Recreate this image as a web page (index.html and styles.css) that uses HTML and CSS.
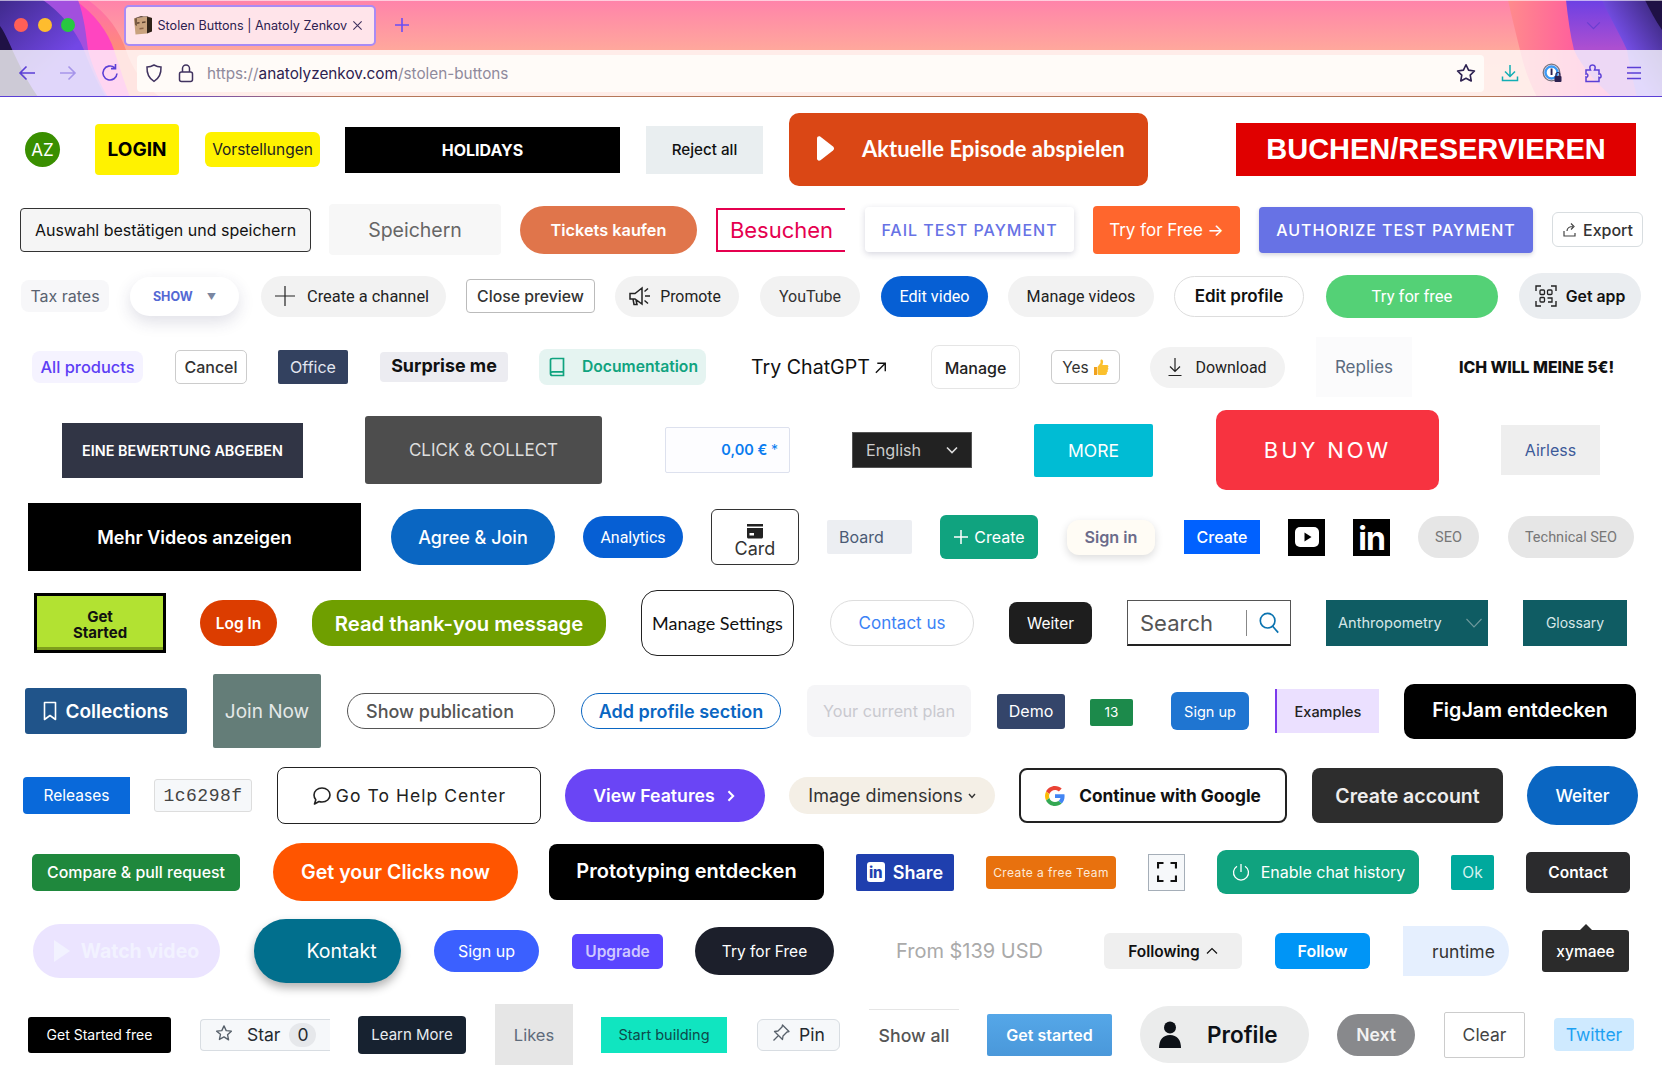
FILE: index.html
```html
<!DOCTYPE html>
<html lang="en">
<head>
  <meta charset="UTF-8" />
  <title>Stolen Buttons | Anatoly Zenkov</title>
  <meta name="viewport" content="width=device-width, initial-scale=1.0" />
  <link rel="stylesheet" href="styles.css">
</head>
<body>
  <header class="chrome">
    <svg class="chrome-bg" viewBox="0 0 1662 97" preserveAspectRatio="none" aria-hidden="true">
      <defs>
        <linearGradient id="base" x1="0" y1="0" x2="0" y2="1"><stop offset="0" stop-color="#ff83aa"/><stop offset=".52" stop-color="#ffa89c"/><stop offset="1" stop-color="#ffb09c"/></linearGradient>
        <linearGradient id="leftPink" x1="0" y1="0" x2="0" y2="1"><stop offset="0" stop-color="#ff6cb0"/><stop offset=".5" stop-color="#ff8a7a"/></linearGradient>
        <linearGradient id="leftDeep" x1="0" y1="0" x2="1" y2="1"><stop offset="0" stop-color="#3f2a8c"/><stop offset=".6" stop-color="#7347e6"/></linearGradient>
        <linearGradient id="rightPink" x1="0" y1="0" x2="1" y2="0"><stop offset="0" stop-color="#ff8b8c"/><stop offset=".7" stop-color="#ff45a6"/></linearGradient>
        <linearGradient id="rightViolet" x1="0" y1="0" x2="0" y2="1"><stop offset="0" stop-color="#6c40e4"/><stop offset=".5" stop-color="#ad4fd0"/></linearGradient>
        <linearGradient id="rightDeep" x1="1" y1="0" x2="0" y2="1"><stop offset="0" stop-color="#33226e"/><stop offset=".6" stop-color="#7a52f0"/></linearGradient>
      </defs>
      <rect width="1662" height="97" fill="url(#base)"/>
      <path d="M88 0C108 14 120 32 126 50C132 68 142 84 160 97H0V0Z" fill="url(#leftPink)"/>
      <path d="M75 0C95 14 108 32 114 50C120 68 125 84 130 97H0V0Z" fill="#ff45c0"/>
      <path d="M78 0C84 16 86 34 88 50C92 66 100 84 108 97H0V0Z" fill="#a24fde"/>
      <path d="M43 0C60 12 76 30 84 50C90 66 98 84 106 97H0V0Z" fill="url(#leftDeep)"/>
      <path d="M0 26C6 34 12 50 18 62C24 74 30 86 38 97H0Z" fill="#1f1145"/>
      <path d="M1508 0C1512 18 1516 34 1520 50C1524 68 1530 84 1537 97H1662V0Z" fill="url(#rightPink)"/>
      <path d="M1566 0C1568 18 1570 34 1574 50C1582 68 1598 84 1612 97H1662V0Z" fill="url(#rightViolet)"/>
      <path d="M1602 0C1610 18 1620 34 1627 50C1630 68 1634 84 1637 97H1662V0Z" fill="url(#rightDeep)"/>
      <path d="M1645 0H1662V30C1655 20 1650 10 1645 0Z" fill="#1f1145"/>
    </svg>

    <div class="tabbar">
      <span class="light red"></span>
      <span class="light amber"></span>
      <span class="light green"></span>
      <div class="tab">
        <svg class="favicon" viewBox="0 0 20 20"><path d="M1 3.5L14 1.5V18.5L2.5 19.5Z" fill="#c9a27e"/><path d="M14 1.5L19 3V16.5L14 18.5Z" fill="#2f2218"/><path d="M1 3.5L8 1L19 3L14 1.5Z" fill="#5c4432"/><path d="M3 7.5L6.5 7V8.5L3 9ZM9 6.8L12.5 6.3V7.8L9 8.3Z" fill="#5e4230"/><path d="M6.5 13L10.5 12.6V14L6.5 14.5Z" fill="#8c6448"/><path d="M1.6 3.5L4 3V11L2 10Z" fill="#7b5c44"/></svg>
        <span class="tab-title">Stolen Buttons | Anatoly Zenkov</span>
        <svg class="tab-close" viewBox="0 0 12 12"><path d="M1.5 1.5L10.5 10.5M10.5 1.5L1.5 10.5" stroke="#40325f" stroke-width="1.2"/></svg>
      </div>
      <svg class="tab-new" viewBox="0 0 16 16"><path d="M8 1V15M1 8H15" stroke="#6a4df5" stroke-width="1.6"/></svg>
      <svg class="tab-list" viewBox="0 0 16 10"><path d="M1 1.5L8 8.5L15 1.5" fill="none" stroke="#6a3fd0" stroke-width="1.4"/></svg>
    </div>

    <div class="toolbar">
      <svg class="tool back" viewBox="0 0 20 20"><path d="M18 10H3M9.5 3.5L3 10L9.5 16.5" fill="none" stroke="#5b3fd6" stroke-width="1.6"/></svg>
      <svg class="tool forward" viewBox="0 0 20 20"><path d="M2 10H17M10.5 3.5L17 10L10.5 16.5" fill="none" stroke="#a695ea" stroke-width="1.6"/></svg>
      <svg class="tool reload" viewBox="0 0 20 20"><path d="M17 10.5A7 7 0 1 1 14.5 4.6M15.5 1V5.6H11" fill="none" stroke="#5b3fd6" stroke-width="1.6"/></svg>
      <div class="urlbar">
        <svg class="tool shield" viewBox="0 0 20 20"><path d="M10 2C12.5 3.5 15 4 17 4C17.3 11 15 15.5 10 18.3C5 15.5 2.7 11 3 4C5 4 7.5 3.5 10 2Z" fill="none" stroke="#40325f" stroke-width="1.5"/></svg>
        <svg class="tool lock" viewBox="0 0 20 20"><rect x="3.5" y="9" width="13" height="9.5" rx="2" fill="none" stroke="#40325f" stroke-width="1.5"/><path d="M6.5 9V5.5A3.5 3.5 0 0 1 13.5 5.5V9" fill="none" stroke="#40325f" stroke-width="1.5"/></svg>
        <span class="url"><span class="url-dim">https://</span>anatolyzenkov.com<span class="url-dim">/stolen-buttons</span></span>
        <svg class="tool star" viewBox="0 0 24 24"><path d="M12 3l2.8 5.9 6.4.9-4.6 4.5 1.1 6.4L12 17.7l-5.7 3 1.1-6.4-4.6-4.5 6.4-.9z" fill="none" stroke="#2d2150" stroke-width="1.8" stroke-linejoin="round"/></svg>
      </div>
      <svg class="tool download" viewBox="0 0 20 20"><path d="M10 2V13M5 8.5L10 13.5L15 8.5M2.5 13.5V17.5H17.5V13.5" fill="none" stroke="#12aeb4" stroke-width="1.5"/></svg>
      <svg class="tool onepass" viewBox="0 0 20 20"><circle cx="9.5" cy="9.5" r="8.3" fill="none" stroke="#77757f" stroke-width="1.3"/><circle cx="9.5" cy="9.5" r="6" fill="#fff" stroke="#3a9bf6" stroke-width="2.4"/><rect x="8.6" y="5.5" width="1.9" height="6.5" fill="#2d2150"/><rect x="12.5" y="13" width="7" height="6" rx="1" fill="#2d2150"/><path d="M14 13V11.5A2 2 0 0 1 18 11.5V13" fill="none" stroke="#2d2150" stroke-width="1.2"/></svg>
      <svg class="tool puzzle" viewBox="0 0 20 20"><path d="M3 7H7.5C6 4 7 2 9.5 2C12 2 13 4 11.5 7H16V11C18.5 10 19 16 16 14.5V18.5H3V14C5.5 15 5.5 10 3 11Z" fill="none" stroke="#5b3fd6" stroke-width="1.5"/></svg>
      <svg class="tool menu" viewBox="0 0 20 20"><path d="M3 4.5H17M3 10H17M3 15.5H17" stroke="#5b3fd6" stroke-width="1.6"/></svg>
    </div>
    <div class="chrome-line"></div>
  </header>

  <main class="gallery">
    <div class="row row-first">
      <button class="btn az">AZ</button>
      <button class="btn login">LOGIN</button>
      <button class="btn vorst">Vorstellungen</button>
      <button class="btn holidays">HOLIDAYS</button>
      <button class="btn reject">Reject all</button>
      <button class="btn episode">
        <svg class="episode-play" viewBox="0 0 20 27"><path d="M2 3.5C2 1.5 4 .8 5.5 1.8L18 11.5C19.4 12.6 19.4 14.4 18 15.5L5.5 25.2C4 26.2 2 25.5 2 23.5Z" fill="#fff"/></svg>
        <span>Aktuelle Episode abspielen</span>
      </button>
      <button class="btn buchen">BUCHEN/RESERVIEREN</button>
    </div>

    <div class="row">
      <button class="btn auswahl">Auswahl bestätigen und speichern</button>
      <button class="btn speichern">Speichern</button>
      <button class="btn tickets">Tickets kaufen</button>
      <button class="btn besuchen">Besuchen</button>
      <button class="btn fail">FAIL TEST PAYMENT</button>
      <button class="btn tryfree-arrow">Try for Free →</button>
      <button class="btn authorize">AUTHORIZE TEST PAYMENT</button>
      <button class="btn export">
        <svg class="ico-16" viewBox="0 0 16 16"><path d="M2 9V14H13V11M5 9C5 6 7.5 4.5 11 4.5M9 1.5L12 4.5L9 7.5" fill="none" stroke="#444" stroke-width="1.2"/></svg>
        <span>Export</span>
      </button>
    </div>

    <div class="row">
      <button class="btn taxrates">Tax rates</button>
      <button class="btn show">SHOW <span class="show-caret">▼</span></button>
      <button class="btn channel">
        <svg class="ico-20" viewBox="0 0 20 20"><path d="M10 0V20M0 10H20" stroke="#222" stroke-width="1.2"/></svg>
        <span>Create a channel</span>
      </button>
      <button class="btn closepreview">Close preview</button>
      <button class="btn promote">
        <svg class="ico-24" viewBox="0 0 24 24"><path d="M2 9.5H7L14 4V20L7 15H2ZM5 15L6 20.5H9L8 16M17 12H22M16.5 7.5L20 4.5M16.5 16.5L20 19.5" fill="none" stroke="#222" stroke-width="1.5"/></svg>
        <span>Promote</span>
      </button>
      <button class="btn youtube">YouTube</button>
      <button class="btn editvideo">Edit video</button>
      <button class="btn managevideos">Manage videos</button>
      <button class="btn editprofile">Edit profile</button>
      <button class="btn tryfree-green">Try for free</button>
      <button class="btn getapp">
        <svg class="ico-22" viewBox="0 0 22 22"><path d="M1 6V1H6M16 1H21V6M21 16V21H16M6 21H1V16" fill="none" stroke="#222" stroke-width="1.4"/><rect x="5" y="5" width="4.5" height="4.5" rx="1" fill="none" stroke="#222" stroke-width="1.3"/><rect x="12.5" y="5" width="4.5" height="4.5" rx="1" fill="none" stroke="#222" stroke-width="1.3"/><rect x="5" y="12.5" width="4.5" height="4.5" rx="1" fill="none" stroke="#222" stroke-width="1.3"/><path d="M12.5 13H17V17H13" fill="none" stroke="#222" stroke-width="1.3"/></svg>
        <span>Get app</span>
      </button>
    </div>

    <div class="row">
      <button class="btn allproducts">All products</button>
      <button class="btn cancel">Cancel</button>
      <button class="btn office">Office</button>
      <button class="btn surprise">Surprise me</button>
      <button class="btn documentation">
        <svg class="ico-20" viewBox="0 0 20 20"><path d="M3.5 16.5V3C3.5 2 4.5 1.5 5.5 1.5H16.5V18.5H5.5C4.5 18.5 3.5 17.5 3.5 16.5C3.5 15.5 4.5 14.8 5.5 14.8H16.5" fill="none" stroke="#10a37f" stroke-width="1.7"/></svg>
        <span>Documentation</span>
      </button>
      <span class="btn chatgpt">Try ChatGPT <svg class="chatgpt-arrow" viewBox="0 0 14 14"><path d="M2 12.5L12 2.5M3.5 2.5H12V11" fill="none" stroke="#111" stroke-width="1.5"/></svg></span>
      <button class="btn manage">Manage</button>
      <button class="btn yes">
        <span>Yes</span>
        <svg class="thumb" viewBox="0 0 16 17"><path d="M1 8H4V16H1Z" fill="#f0a11f"/><path d="M4.5 8L7.5 4V1.2C7.5.3 9.6.3 10 2C10.3 3.3 9.8 4.8 9.4 6H14C15.6 6 15.8 8 14.8 8.6C15.8 9.4 15.5 10.8 14.5 11.1C15.2 12 14.8 13.2 13.8 13.5C14.2 14.8 13.5 16 12 16H6.5C5.5 16 4.8 15.6 4.5 15.2Z" fill="#fbc02d"/></svg>
      </button>
      <button class="btn download-btn">
        <svg class="ico-20" viewBox="0 0 20 20"><path d="M10 1V14M5 9.5L10 14.5L15 9.5M3.5 18.5H16.5" fill="none" stroke="#222" stroke-width="1.2"/></svg>
        <span>Download</span>
      </button>
      <button class="btn replies">Replies</button>
      <span class="btn ich">ICH WILL MEINE 5€!</span>
    </div>

    <div class="row row-tight">
      <button class="btn bewertung">EINE BEWERTUNG ABGEBEN</button>
      <button class="btn clickcollect">CLICK &amp; COLLECT</button>
      <button class="btn price"><span>0,00 € <small>*</small></span></button>
      <button class="btn english">
        <span>English</span>
        <svg class="ico-12" viewBox="0 0 12 8"><path d="M1 1.5L6 6.5L11 1.5" fill="none" stroke="#ddd" stroke-width="1.6"/></svg>
      </button>
      <button class="btn more">MORE</button>
      <button class="btn buynow">BUY NOW</button>
      <button class="btn airless">Airless</button>
    </div>

    <div class="row row-tight">
      <button class="btn mehr">Mehr Videos anzeigen</button>
      <button class="btn agree">Agree &amp; Join</button>
      <button class="btn analytics">Analytics</button>
      <button class="btn card">
        <svg class="card-ico" viewBox="0 0 18 16"><path d="M1 1H17V3.5H1ZM1 5H17V14C17 15 16 15.5 15.5 15.5H2.5C2 15.5 1 15 1 14Z" fill="#222"/><rect x="3.5" y="10" width="4.5" height="2.5" fill="#fff"/></svg>
        <span>Card</span>
      </button>
      <button class="btn board">Board</button>
      <button class="btn create-green">
        <svg class="ico-16" viewBox="0 0 16 16"><path d="M8 1V15M1 8H15" stroke="#fff" stroke-width="1.5"/></svg>
        <span>Create</span>
      </button>
      <button class="btn signin">Sign in</button>
      <button class="btn create-blue">Create</button>
      <span class="btn social">
        <svg class="ico-24 yt" viewBox="0 0 24 20"><rect width="24" height="20" rx="5" fill="#fff"/><path d="M9.5 5.5L16.5 10L9.5 14.5Z" fill="#000"/></svg>
      </span>
      <span class="btn social in-logo">in</span>
      <button class="btn seo">SEO</button>
      <button class="btn techseo">Technical SEO</button>
    </div>

    <div class="row row-wide">
      <button class="btn getstarted-lime">Get<br>Started</button>
      <button class="btn login-red">Log In</button>
      <button class="btn thankyou">Read thank-you message</button>
      <button class="btn settings">Manage Settings</button>
      <button class="btn contactus">Contact us</button>
      <button class="btn weiter-dark">Weiter</button>
      <div class="btn search">
        <span class="search-text">Search</span>
        <span class="search-line"></span>
        <svg class="ico-22" viewBox="0 0 22 24"><circle cx="9.5" cy="9.5" r="8" fill="none" stroke="#0a73b0" stroke-width="1.8"/><path d="M15 15.5L21 22.5" stroke="#0a73b0" stroke-width="1.8"/></svg>
      </div>
      <button class="btn anthro">
        <span>Anthropometry</span>
        <svg class="ico-16" viewBox="0 0 16 10"><path d="M.5 1L8 9L15.5 1" fill="none" stroke="#6f9a9d" stroke-width="1.1"/></svg>
      </button>
      <button class="btn glossary">Glossary</button>
    </div>

    <div class="row">
      <button class="btn collections">
        <svg class="bookmark" viewBox="0 0 14 20"><path d="M1.5 1.5H12.5V18.5L7 14.5L1.5 18.5Z" fill="none" stroke="#fff" stroke-width="1.6" stroke-linejoin="round"/></svg>
        <span>Collections</span>
      </button>
      <button class="btn joinnow">Join Now</button>
      <button class="btn showpub">Show publication</button>
      <button class="btn addprofile">Add profile section</button>
      <button class="btn currentplan">Your current plan</button>
      <button class="btn demo">Demo</button>
      <span class="btn count">13</span>
      <button class="btn signup-blue">Sign up</button>
      <button class="btn examples">Examples</button>
      <button class="btn figjam">FigJam entdecken</button>
    </div>

    <div class="row">
      <button class="btn releases">Releases</button>
      <button class="btn commit">1c6298f</button>
      <button class="btn helpcenter">
        <svg class="ico-20" viewBox="0 0 20 20"><path d="M10 2C14.5 2 18 5 18 9C18 13 14.5 16 10 16C9 16 8 15.9 7 15.5L2.5 18L3.8 13.7C2.7 12.4 2 10.8 2 9C2 5 5.5 2 10 2Z" fill="none" stroke="#222" stroke-width="1.6" stroke-linejoin="round"/></svg>
        <span>Go To Help Center</span>
      </button>
      <button class="btn features">
        <span>View Features</span>
        <svg class="ico-12" viewBox="0 0 10 14"><path d="M2 1.5L7.5 7L2 12.5" fill="none" stroke="#fff" stroke-width="2.4"/></svg>
      </button>
      <button class="btn dimensions">
        <span>Image dimensions</span>
        <svg class="ico-8" viewBox="0 0 8 6"><path d="M1 1L4 4.5L7 1" fill="none" stroke="#333" stroke-width="1.4"/></svg>
      </button>
      <button class="btn google">
        <svg class="ico-20" viewBox="0 0 48 48">
          <path fill="#EA4335" d="M24 9.5c3.54 0 6.71 1.22 9.21 3.6l6.85-6.85C35.9 2.38 30.47 0 24 0 14.62 0 6.51 5.38 2.56 13.22l7.98 6.19C12.43 13.72 17.74 9.5 24 9.5z"/>
          <path fill="#4285F4" d="M46.98 24.55c0-1.57-.15-3.09-.38-4.55H24v9.02h12.94c-.58 2.96-2.26 5.48-4.78 7.18l7.73 6c4.51-4.18 7.09-10.36 7.09-17.65z"/>
          <path fill="#FBBC05" d="M10.53 28.59c-.48-1.45-.76-2.99-.76-4.59s.27-3.14.76-4.59l-7.98-6.19C.92 16.46 0 20.12 0 24c0 3.88.92 7.54 2.56 10.78l7.97-6.19z"/>
          <path fill="#34A853" d="M24 48c6.48 0 11.93-2.13 15.89-5.81l-7.73-6c-2.15 1.45-4.92 2.3-8.16 2.3-6.26 0-11.57-4.22-13.47-9.91l-7.98 6.19C6.51 42.62 14.62 48 24 48z"/>
        </svg>
        <span>Continue with Google</span>
      </button>
      <button class="btn createaccount">Create account</button>
      <button class="btn weiter-blue">Weiter</button>
    </div>

    <div class="row">
      <button class="btn compare">Compare &amp; pull request</button>
      <button class="btn clicks">Get your Clicks now</button>
      <button class="btn prototyping">Prototyping entdecken</button>
      <button class="btn share">
        <span class="share-in">in</span>
        <span>Share</span>
      </button>
      <button class="btn freeteam">Create a free Team</button>
      <button class="btn expand">
        <svg class="ico-20" viewBox="0 0 20 20"><path d="M1 6.5V1H6.5M13.5 1H19V6.5M19 13.5V19H13.5M6.5 19H1V13.5" fill="none" stroke="#111" stroke-width="2.2"/></svg>
      </button>
      <button class="btn chathistory">
        <svg class="ico-20" viewBox="0 0 20 20"><path d="M10 2V10M6 4.2A7.5 7.5 0 1 0 14 4.2" fill="none" stroke="#fff" stroke-width="1.3"/></svg>
        <span>Enable chat history</span>
      </button>
      <button class="btn ok">Ok</button>
      <button class="btn contact-dark">Contact</button>
    </div>

    <div class="row">
      <button class="btn watch">
        <svg class="watch-play" viewBox="0 0 16 22"><path d="M0 0L16 11L0 22Z" fill="#f2f2ff"/></svg>
        <span>Watch video</span>
      </button>
      <button class="btn kontakt">Kontakt</button>
      <button class="btn signup-royal">Sign up</button>
      <button class="btn upgrade">Upgrade</button>
      <button class="btn tryfree-dark">Try for Free</button>
      <span class="btn from">From $139 USD</span>
      <button class="btn following">
        <span>Following</span>
        <svg class="ico-12" viewBox="0 0 12 8"><path d="M1 6.5L6 1.5L11 6.5" fill="none" stroke="#111" stroke-width="1.2"/></svg>
      </button>
      <button class="btn follow">Follow</button>
      <button class="btn runtime">runtime</button>
      <button class="btn xymaee">xymaee</button>
    </div>

    <div class="row row-last">
      <button class="btn getstarted-black">Get Started free</button>
      <button class="btn star-btn">
        <svg class="ico-18 star-ico" viewBox="0 0 24 24"><path d="M12 2.5l2.9 6.3 6.9.8-5.1 4.7 1.4 6.8L12 17.1 5.9 20.6l1.4-6.8L2.2 9.6l6.9-.8z" fill="none" stroke="#57606a" stroke-width="1.8" stroke-linejoin="round"/></svg>
        <span class="star-label">Star</span>
        <span class="star-count">0</span>
      </button>
      <button class="btn learnmore">Learn More</button>
      <button class="btn likes">Likes</button>
      <button class="btn startbuilding">Start building</button>
      <button class="btn pin">
        <svg class="ico-18 star-ico" viewBox="0 0 18 18"><path d="M10.5 1L17 7.5L15 8L11 12L10.5 15.5L2.5 7.5L6 7L10 3ZM6 12L1.5 16.5" fill="none" stroke="#57606a" stroke-width="1.3" stroke-linejoin="round"/></svg>
        <span>Pin</span>
      </button>
      <button class="btn showall">Show all</button>
      <button class="btn getstarted-blue">Get started</button>
      <button class="btn profile">
        <svg class="profile-ico" viewBox="0 0 24 28"><circle cx="12" cy="6.5" r="6" fill="#0d1117"/><path d="M1 27C1 19 5 14 12 14C19 14 23 19 23 27Z" fill="#0d1117"/></svg>
        <span>Profile</span>
      </button>
      <button class="btn next">Next</button>
      <button class="btn clear">Clear</button>
      <button class="btn twitter">Twitter</button>
    </div>
  </main>
</body>
</html>
```

FILE: styles.css
```css
html, body {
  margin: 0;
  background: #fff;
}

body {
  font-family: Inter, "Liberation Sans", sans-serif;
  overflow: hidden;
  height: 1080px;
}

/* browser window */
.chrome {
  position: relative;
  height: 97px;
}

.chrome-bg {
  position: absolute;
  inset: 0;
  width: 100%;
  height: 100%;
}

.tabbar {
  position: relative;
  display: flex;
  align-items: center;
  height: 50px;
  padding-left: 14px;
  box-shadow: inset 0 1px rgba(255, 255, 255, 0.6);
}

.light {
  width: 14px;
  height: 14px;
  margin-right: 9.5px;
  border-radius: 50%;
}

.light.red { background: #ff5f57; }
.light.amber { background: #febc2e; }
.light.green { background: #28c840; }

.tab {
  display: flex;
  align-items: center;
  box-sizing: border-box;
  width: 252px;
  height: 41px;
  margin-left: 39px;
  padding-left: 7px;
  background: #ffe4ea;
  border: 2px solid #a98bf5;
  border-radius: 5px;
}

.favicon {
  width: 20px;
  height: 20px;
}

.tab-title {
  margin-left: 5px;
  font-size: 12.6px;
  color: #2d2150;
  white-space: nowrap;
}

.tab-close {
  width: 11px;
  height: 11px;
  margin-left: 5px;
}

.tab-new {
  width: 16px;
  height: 16px;
  margin-left: 18px;
}

.tab-list {
  width: 15px;
  height: 9px;
  margin-left: auto;
  margin-right: 61px;
}

.toolbar {
  position: relative;
  display: flex;
  align-items: center;
  height: 46px;
  padding-left: 17px;
  background: rgba(255, 255, 255, 0.78);
}

.tool {
  width: 20px;
  height: 20px;
  flex: none;
}

.forward { margin-left: 21px; }
.reload { margin-left: 22px; }
.download { margin-left: 16px; }
.onepass { margin-left: 22px; }
.puzzle { margin-left: 21px; }
.menu { margin-left: 21px; }

.urlbar {
  display: flex;
  align-items: center;
  box-sizing: border-box;
  width: 1347px;
  height: 37px;
  margin-left: 17px;
  padding: 0 7px;
  background: #fffbf8;
  border-radius: 4px;
}

.lock { margin-left: 12px; }

.url {
  margin-left: 11px;
  font-size: 15.3px;
  color: #2d2150;
}

.url-dim { color: #8f8a9c; }

.star {
  width: 22px;
  height: 22px;
  margin-left: auto;
}

.chrome-line {
  position: relative;
  height: 1px;
  background: linear-gradient(to right, #5b3fd6 0, #5b3fd6 9%, #b5775a 20%, #b5775a 90%, #5b3fd6 96%);
}

/* button gallery */
.row {
  display: flex;
  align-items: center;
  margin-top: 18px;
}

.row-first { margin-top: 16px; }
.row-tight { margin-top: 13px; }
.row-wide { margin-top: 19px; }
.row-last { margin-top: 21px; }

.btn {
  display: flex;
  align-items: center;
  justify-content: center;
  flex: none;
  box-sizing: border-box;
  padding: 0;
  border: 0;
  font: 400 16px Inter, "Liberation Sans", sans-serif;
  color: #fff;
  white-space: nowrap;
}

.ico-8 { width: 8px; height: 6px; }
.ico-12 { width: 12px; height: 12px; }
.ico-16 { width: 16px; height: 16px; }
.ico-18 { width: 18px; height: 18px; }
.ico-20 { width: 20px; height: 20px; }
.ico-22 { width: 22px; height: 22px; }
.ico-24 { width: 24px; height: 24px; }

.az { margin-left: 25px; width: 35px; height: 35px; border-radius: 50%; background: #3a8f00; font-size: 17px; }
.login { margin-left: 35px; width: 84px; height: 51px; border-radius: 4px; background: #fff200; color: #000; font-size: 19px; font-weight: 700; }
.vorst { margin-left: 26px; width: 115px; height: 35px; border-radius: 6px; background: #fff200; color: #222; font-size: 15.5px; }
.holidays { margin-left: 25px; width: 275px; height: 46px; background: #000; font-size: 16px; font-weight: 700; }
.reject { margin-left: 26px; width: 117px; height: 48px; background: #e9eef0; color: #111; font-size: 15.2px; font-weight: 500; }
.episode { margin-left: 26px; width: 359px; height: 73px; justify-content: flex-start; padding: 0 0 2px 26px; gap: 27px; border-radius: 10px; background: #da4715; font: 700 22px Lato, sans-serif; }
.episode-play { width: 20px; height: 27px; }
.buchen { margin-left: 88px; width: 400px; height: 53px; background: #e00000; font: 700 29px "Liberation Sans", sans-serif; }

.auswahl { margin-left: 20px; width: 291px; height: 44px; border: 1px solid #333; border-radius: 4px; background: #f5f5f5; color: #111; font-size: 16px; }
.speichern { margin-left: 18px; width: 172px; height: 51px; border-radius: 4px; background: #f7f7f7; color: #666; font-size: 19.5px; }
.tickets { margin-left: 19px; width: 177px; height: 48px; border-radius: 24px; background: #e0754b; font-size: 16.3px; font-weight: 600; }
.besuchen { margin-left: 19px; width: 129px; height: 44px; border: 2px solid #e5004f; border-right: 0; background: #fff; color: #e5004f; font-size: 22px; }
.fail { margin-left: 20px; width: 209px; height: 45px; border-radius: 4px; background: #fff; box-shadow: 0 2px 6px rgba(50, 50, 93, 0.2); color: #6772e5; font-size: 16px; font-weight: 500; letter-spacing: 1px; }
.tryfree-arrow { margin-left: 19px; width: 147px; height: 48px; border-radius: 4px; background: #ff662d; font-size: 17px; }
.authorize { margin-left: 19px; width: 274px; height: 46px; border-radius: 4px; background: #6772e5; box-shadow: 0 2px 4px rgba(50, 50, 93, 0.2); font-size: 16px; font-weight: 500; letter-spacing: 0.95px; }
.export { margin-left: 19px; width: 91px; height: 35px; gap: 5px; border: 1px solid #d8dde0; border-radius: 6px; background: #fff; color: #333; font-size: 16px; font-weight: 500; }

.taxrates { margin-left: 21px; width: 88px; height: 32px; border-radius: 8px; background: #f7f7f9; color: #5a6270; font-size: 16px; }
.show { margin-left: 21px; width: 109px; height: 39px; gap: 8px; border-radius: 20px; background: #fff; box-shadow: 0 6px 16px rgba(50, 50, 93, 0.15); color: #5469d4; font-size: 12.5px; font-weight: 700; }
.show-caret { font-size: 9px; color: #7a86a0; margin-left: 6px; }
.channel { margin-left: 22px; width: 185px; height: 41px; justify-content: flex-start; padding-left: 14px; gap: 12px; border-radius: 21px; background: #f2f2f2; color: #222; font: 400 16.4px Roboto, sans-serif; }
.closepreview { margin-left: 20px; width: 129px; height: 34px; border: 1px solid #bbb; border-radius: 4px; background: #fff; color: #333; font-size: 15.8px; font-weight: 500; }
.promote { margin-left: 20px; width: 124px; height: 41px; gap: 8px; padding-right: 5px; border-radius: 21px; background: #f2f2f2; color: #222; font: 400 15.8px Roboto, sans-serif; }
.youtube { margin-left: 21px; width: 100px; height: 41px; border-radius: 21px; background: #f2f2f2; color: #333; font: 400 16px Roboto, sans-serif; }
.editvideo { margin-left: 21px; width: 107px; height: 41px; border-radius: 21px; background: #065fd4; font: 400 16.2px Roboto, sans-serif; }
.managevideos { margin-left: 20px; width: 146px; height: 41px; border-radius: 21px; background: #f2f2f2; color: #222; font: 400 16.1px Roboto, sans-serif; }
.editprofile { margin-left: 20px; width: 130px; height: 41px; border: 1px solid #ddd; border-radius: 21px; background: #fff; color: #111; font-size: 17px; font-weight: 600; }
.tryfree-green { margin-left: 22px; width: 172px; height: 43px; border-radius: 22px; background: #54d176; font: 400 16.6px Roboto, sans-serif; }
.getapp { margin-left: 21px; width: 122px; height: 46px; gap: 9px; border-radius: 23px; background: #eaedf0; color: #111; font-size: 15.8px; font-weight: 600; }

.allproducts { margin-left: 32px; width: 111px; height: 32px; border-radius: 8px; background: #f5f3ff; color: #5e3ff5; font-size: 16.4px; font-weight: 500; }
.cancel { margin-left: 32px; width: 72px; height: 34px; border: 1px solid #ccc; border-radius: 5px; background: #fff; color: #333; font-size: 16px; font-weight: 500; }
.office { margin-left: 31px; width: 70px; height: 34px; border-radius: 2px; background: #33415f; color: #e2e6f0; font-size: 16px; }
.surprise { margin-left: 32px; width: 128px; height: 30px; padding-bottom: 3px; border-radius: 4px; background: #ececf1; color: #111; font-size: 17.9px; font-weight: 700; }
.documentation { margin-left: 31px; width: 167px; height: 36px; gap: 15px; padding-bottom: 1px; border-radius: 8px; background: #e5f4f1; color: #10a37f; font-size: 15.7px; font-weight: 600; }
.chatgpt { margin-left: 45px; width: 136px; gap: 4px; color: #111; font-size: 19.6px; }
.chatgpt-arrow { width: 15px; height: 15px; }
.manage { margin-left: 44px; width: 89px; height: 44px; padding-top: 1px; border: 1px solid #e5e5e5; border-radius: 8px; background: #fff; color: #222; font-size: 16px; font-weight: 500; }
.yes { margin-left: 31px; width: 69px; height: 34px; gap: 4px; border: 1px solid #ccc; border-radius: 6px; background: #fff; color: #333; font-size: 15.5px; }
.thumb { width: 16px; height: 17px; }
.download-btn { margin-left: 30px; width: 135px; height: 41px; gap: 10px; padding-right: 3px; border-radius: 21px; background: #f2f2f2; color: #222; font: 400 16px Roboto, sans-serif; }
.replies { margin-left: 31px; width: 96px; height: 60px; background: #fbfbfc; color: #5a6b7f; font-size: 17px; }
.ich { margin-left: 47px; width: 155px; color: #111; font-size: 15.8px; font-weight: 800; }

.bewertung { margin-left: 62px; width: 241px; height: 55px; background: #313545; font-size: 14.4px; font-weight: 600; }
.clickcollect { margin-left: 62px; width: 237px; height: 68px; border-radius: 3px; background: #4d4d4d; color: #ddd; font-size: 17px; }
.price { margin-left: 63px; width: 125px; height: 46px; justify-content: flex-end; padding: 0 11px 2px 0; border: 1px solid #dde1ee; border-radius: 2px; background: #fdfdff; color: #0a7cf0; font-size: 14.5px; font-weight: 600; }
.price small { font-size: 14px; font-weight: 400; }
.english { margin-left: 62px; width: 120px; height: 36px; justify-content: space-between; padding: 0 13px; border: 1px solid #555; background: #222; color: #ccc; font-size: 16.2px; }
.more { margin-left: 62px; width: 119px; height: 53px; border-radius: 2px; background: #00bcd4; font-size: 17.5px; }
.buynow { margin-left: 63px; width: 223px; height: 80px; border-radius: 10px; background: #f73340; font-size: 22px; letter-spacing: 2.9px; }
.airless { margin-left: 62px; width: 99px; height: 50px; background: #eee; color: #3d5a99; font-size: 16px; }

.mehr { margin-left: 28px; width: 333px; height: 68px; background: #000; font-size: 18px; font-weight: 600; }
.agree { margin-left: 30px; width: 164px; height: 56px; border-radius: 28px; background: #0a66c2; font-size: 18px; font-weight: 500; }
.analytics { margin-left: 28px; width: 100px; height: 42px; border-radius: 21px; background: #065fd4; font: 400 16px Roboto, sans-serif; }
.card { margin-left: 28px; width: 88px; height: 56px; flex-direction: column; padding-top: 8px; border: 1.5px solid #333; border-radius: 6px; background: #fff; color: #333; font-size: 18px; line-height: 20px; }
.card-ico { width: 18px; height: 16px; }
.board { margin-left: 28px; width: 85px; height: 34px; justify-content: flex-start; padding-left: 12px; border-radius: 2px; background: #eceef2; color: #4a5a75; font-size: 16px; }
.create-green { margin-left: 28px; width: 98px; height: 44px; gap: 5px; border-radius: 6px; background: #10a37f; font-size: 16px; }
.signin { margin-left: 29px; width: 88px; height: 35px; border-radius: 12px; background: #fffcf5; box-shadow: 0 3px 8px rgba(0, 0, 0, 0.14); color: #6b6b8a; font-size: 16.2px; font-weight: 600; }
.create-blue { margin-left: 29px; width: 76px; height: 34px; background: #0061ff; font-size: 16px; font-weight: 500; }
.social { margin-left: 28px; width: 37px; height: 37px; background: #000; }
.yt { width: 24px; height: 20px; }
.in-logo { font: 700 32px Inter, sans-serif; letter-spacing: -1px; line-height: 37px; padding-top: 2px; }
.seo { margin-left: 28px; width: 61px; height: 42px; border-radius: 21px; background: #e6e6e6; color: #777; font: 400 14.5px Roboto, sans-serif; }
.techseo { margin-left: 29px; width: 126px; height: 42px; border-radius: 21px; background: #e6e6e6; color: #777; font: 400 14.5px Roboto, sans-serif; }

.getstarted-lime { margin-left: 34px; width: 132px; height: 60px; padding-top: 3px; border: 3px solid #000; background: #b2e232; box-shadow: inset 0 -3px #7d9e1c; color: #111; font-size: 15px; font-weight: 700; line-height: 16px; text-align: center; }
.login-red { margin-left: 34px; width: 77px; height: 46px; border-radius: 23px; background: #dc3d00; font-size: 15.5px; font-weight: 600; }
.thankyou { margin-left: 35px; width: 294px; height: 46px; border-radius: 20px; background: #6f9f00; font-size: 20.3px; font-weight: 600; }
.settings { margin-left: 35px; width: 153px; height: 66px; border: 1.5px solid #222; border-radius: 16px; background: #fff; color: #111; font: 400 18px Lato, sans-serif; }
.contactus { margin-left: 36px; width: 144px; height: 46px; border: 1px solid #ddd; border-radius: 23px; background: #fff; color: #3b82f6; font-size: 17px; }
.weiter-dark { margin-left: 35px; width: 83px; height: 42px; border-radius: 8px; background: #1e1e1e; font-size: 15.5px; }
.search { margin-left: 35px; width: 164px; height: 46px; justify-content: flex-start; padding-left: 12px; border: 1px solid #555; border-bottom: 2px solid #222; background: #fff; color: #555; }
.search-text { font-size: 22px; width: 106px; }
.search-line { width: 1px; height: 26px; background: #888; margin-right: 11px; }
.anthro { margin-left: 35px; width: 162px; height: 46px; justify-content: space-between; padding: 0 6px 0 12px; background: #0f5c63; color: #d6e7e8; font-size: 14.6px; }
.glossary { margin-left: 35px; width: 104px; height: 46px; padding-bottom: 1px; background: #0f5c63; color: #d6e7e8; font-size: 14px; }

.collections { margin-left: 25px; width: 162px; height: 46px; gap: 8px; border-radius: 3px; background: #20548a; font-size: 19px; font-weight: 600; }
.bookmark { width: 14px; height: 20px; }
.joinnow { margin-left: 26px; width: 108px; height: 74px; border-radius: 2px; background: #647d78; color: #e4e9e8; font-size: 19px; }
.showpub { margin-left: 26px; width: 208px; height: 36px; justify-content: flex-start; padding-left: 18px; border: 1px solid #555; border-radius: 18px; background: #fff; color: #555; font-size: 18px; font-weight: 500; }
.addprofile { margin-left: 26px; width: 200px; height: 36px; border: 1px solid #0a66c2; border-radius: 18px; background: #fff; color: #0a66c2; font-size: 18px; font-weight: 600; }
.currentplan { margin-left: 26px; width: 164px; height: 52px; border-radius: 8px; background: #f5f5f7; color: #c9c9cf; font-size: 16.2px; }
.demo { margin-left: 26px; width: 68px; height: 35px; border-radius: 3px; background: #34456a; font-size: 16px; }
.count { margin-left: 25px; margin-top: 2px; width: 43px; height: 27px; border-radius: 2px; background: #1c8a4b; font-size: 13.5px; }
.signup-blue { margin-left: 38px; width: 78px; height: 38px; border-radius: 6px; background: #1f75d1; font-size: 14.5px; }
.examples { margin-left: 26px; width: 104px; height: 44px; border-left: 2px solid #7c3aed; background: #ebe0ff; color: #222; font-size: 14.5px; font-weight: 500; }
.figjam { margin-left: 25px; width: 232px; height: 55px; padding-bottom: 2px; border-radius: 10px; background: #000; font-size: 19.8px; font-weight: 600; }

.releases { margin-left: 23px; width: 107px; height: 37px; border-radius: 4px 0 0 4px; background: #0969da; font-size: 15.5px; }
.commit { margin-left: 24px; width: 98px; height: 33px; border: 1px solid #ddd; border-radius: 3px; background: #f6f8fa; color: #444; font: 400 18px "Liberation Mono", monospace; letter-spacing: 0.5px; }
.helpcenter { margin-left: 25px; width: 264px; height: 57px; gap: 4px; border: 1px solid #222; border-radius: 8px; background: #fff; color: #222; font-size: 17.5px; letter-spacing: 1.05px; }
.features { margin-left: 24px; width: 200px; height: 53px; gap: 10px; border-radius: 27px; background: #6a45f5; font-size: 17.7px; font-weight: 600; }
.dimensions { margin-left: 24px; width: 206px; height: 37px; gap: 5px; border-radius: 19px; background: #f4efe6; color: #333; font-size: 18px; }
.google { margin-left: 24px; width: 268px; height: 55px; gap: 14px; border: 2px solid #222; border-radius: 8px; background: #fff; color: #111; font-size: 17.3px; font-weight: 700; }
.createaccount { margin-left: 25px; width: 191px; height: 55px; border-radius: 8px; background: #2d2d2d; color: #eee; font-size: 19.5px; font-weight: 600; }
.weiter-blue { margin-left: 24px; width: 111px; height: 59px; border-radius: 30px; background: #0a66c2; font-size: 17.5px; font-weight: 500; }

.compare { margin-left: 32px; width: 208px; height: 37px; border-radius: 5px; background: #1f883d; font-size: 15.9px; font-weight: 500; }
.clicks { margin-left: 33px; width: 245px; height: 58px; border-radius: 29px; background: #ff5500; font-size: 19.6px; font-weight: 600; }
.prototyping { margin-left: 31px; width: 275px; height: 56px; padding-bottom: 2px; border-radius: 8px; background: #000; font-size: 20px; font-weight: 600; }
.share { margin-left: 32px; width: 98px; height: 37px; gap: 8px; border-radius: 2px; background: #1f3fae; font-size: 18px; font-weight: 600; }
.share-in { display: flex; align-items: center; justify-content: center; width: 18px; height: 20px; border-radius: 3px; background: #fff; color: #1f3fae; font-size: 15px; font-weight: 800; }
.freeteam { margin-left: 32px; width: 130px; height: 33px; border-radius: 4px; background: #e8710e; color: #fde9d8; font-size: 12px; letter-spacing: 0.4px; }
.expand { margin-left: 32px; width: 37px; height: 37px; border: 1px solid #a5aeb8; background: #f6f8fa; }
.chathistory { margin-left: 32px; width: 202px; height: 44px; gap: 10px; border-radius: 9px; background: #10a37f; font-size: 16px; }
.ok { margin-left: 32px; width: 43px; height: 35px; border-radius: 2px; background: #00a99d; color: #d4f2ef; font-size: 15.5px; }
.contact-dark { margin-left: 32px; width: 104px; height: 41px; border-radius: 5px; background: #2b2b2d; font-size: 15.5px; font-weight: 600; }

.watch { margin-left: 33px; width: 187px; height: 54px; gap: 11px; border-radius: 27px; background: #ebe4ff; color: #f2f2ff; font-size: 19.5px; font-weight: 700; }
.watch-play { width: 16px; height: 22px; }
.kontakt { margin-left: 34px; width: 147px; height: 64px; padding-left: 28px; border-radius: 32px; background: #016f8d; box-shadow: 0 5px 10px rgba(0, 0, 0, 0.3); font-size: 19.5px; }
.signup-royal { margin-left: 33px; width: 105px; height: 42px; border-radius: 21px; background: #3b60ff; font-size: 16px; }
.upgrade { margin-left: 33px; width: 91px; height: 35px; border-radius: 5px; background: #5a45ff; color: #cfc8ff; font-size: 15.5px; font-weight: 600; }
.tryfree-dark { margin-left: 32px; width: 139px; height: 48px; border-radius: 24px; background: #1c1f2b; font-size: 15.5px; }
.from { margin-left: 62px; width: 147px; color: #aaa; font-size: 20px; }
.following { margin-left: 61px; width: 138px; height: 36px; gap: 6px; border-radius: 6px; background: #efefef; color: #111; font-size: 15.5px; font-weight: 600; }
.follow { margin-left: 33px; width: 95px; height: 36px; border-radius: 6px; background: #0095f6; font-size: 16px; font-weight: 600; }
.runtime { margin-left: 33px; width: 106px; height: 50px; padding-left: 15px; border-radius: 0 25px 25px 0; background: #e5effe; color: #333; font-size: 17.5px; }
.xymaee { position: relative; margin-left: 33px; width: 87px; height: 42px; border-radius: 3px; background: #2b2b2b; font-size: 15.5px; font-weight: 500; }
.xymaee::before { content: ""; position: absolute; left: 38px; top: -6px; border: 6px solid transparent; border-top: 0; border-bottom-color: #2b2b2b; }

.getstarted-black { margin-left: 28px; width: 143px; height: 36px; border-radius: 3px; background: #000; font-size: 14px; }
.star-btn { margin-left: 29px; width: 130px; height: 32px; justify-content: flex-start; padding-left: 14px; border: 1px solid #d8dde2; border-right: 0; border-radius: 4px 0 0 4px; background: #f6f8fa; color: #24292f; font-size: 17.5px; }
.star-ico { margin-bottom: 4px; }
.star-label { margin-left: 14px; }
.star-count { display: flex; align-items: center; justify-content: center; width: 27px; height: 24px; margin-left: 9px; border-radius: 12px; background: #e6e8eb; }
.learnmore { margin-left: 28px; width: 108px; height: 38px; border-radius: 4px; background: #172230; color: #e8ecf0; font-size: 15px; }
.likes { margin-left: 29px; width: 78px; height: 61px; background: #e6e6e6; color: #5e6b7b; font-size: 16.5px; }
.startbuilding { margin-left: 28px; width: 126px; height: 36px; background: #10e5c0; color: #0d4a4a; font-size: 14.5px; }
.pin { margin-left: 30px; width: 83px; height: 32px; gap: 9px; border: 1px solid #d8dde2; border-radius: 6px; background: #f6f8fa; color: #24292f; font-size: 17.5px; }
.showall { margin-left: 29px; width: 90px; height: 51px; border-top: 1px solid #e5e5e5; background: #fff; color: #555; font-size: 17.7px; font-weight: 500; }
.getstarted-blue { margin-left: 28px; width: 125px; height: 42px; border-radius: 2px; background: linear-gradient(#55a7e8, #4a98da); font-size: 16px; font-weight: 600; }
.profile { margin-left: 28px; width: 169px; height: 57px; justify-content: flex-start; padding-left: 18px; gap: 25px; border-radius: 29px; background: #ebecec; color: #0d1117; font-size: 22.5px; font-weight: 600; }
.profile-ico { width: 24px; height: 28px; }
.next { margin-left: 28px; width: 78px; height: 42px; border-radius: 21px; background: #88898c; color: #f2f2f2; font-size: 17.5px; font-weight: 600; }
.clear { margin-left: 29px; width: 81px; height: 46px; border: 1px solid #ccc; border-radius: 2px; background: #fff; color: #444; font-size: 17.5px; }
.twitter { margin-left: 29px; width: 80px; height: 33px; border-radius: 4px; background: #cfeaff; color: #1da1f2; font-size: 17.5px; }
```
